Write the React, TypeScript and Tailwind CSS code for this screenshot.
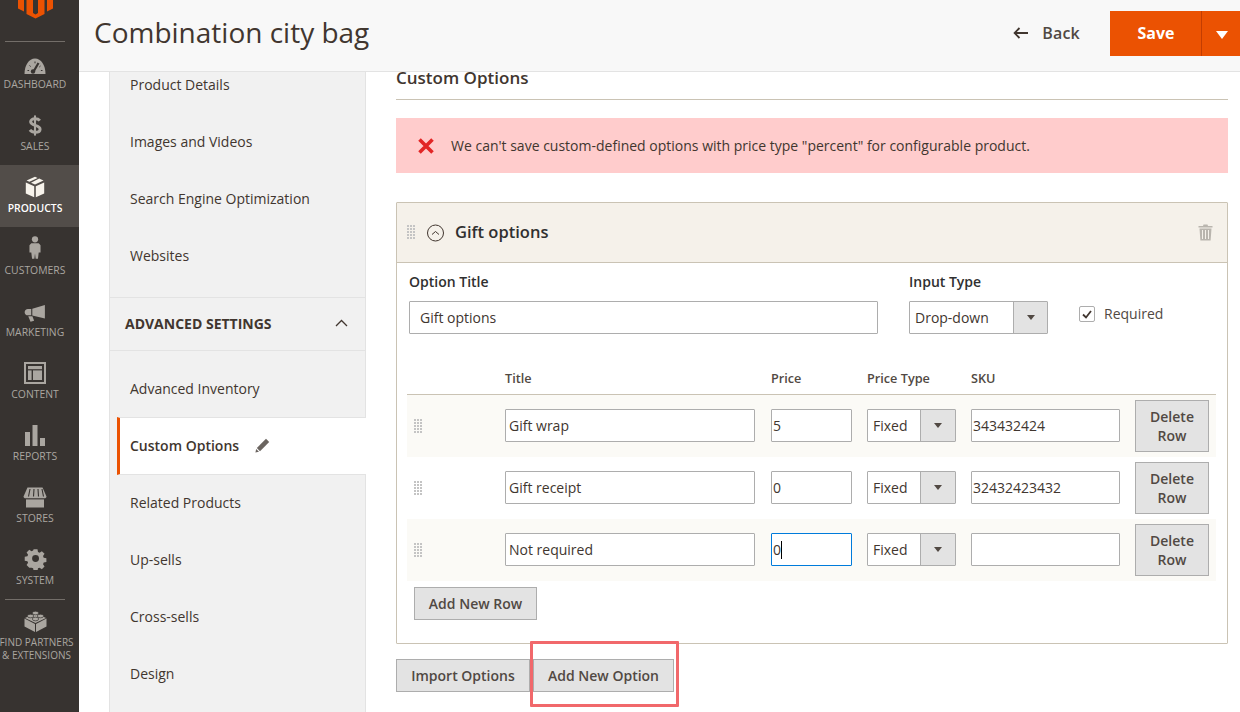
import React from "react";

const font = { fontFamily: '"Open Sans", sans-serif' };

const Grip = () => (
  <svg width="9" height="15" viewBox="0 0 9 15" className="shrink-0">
    {[0, 3, 6].map((x) =>
      [0, 3, 6, 9, 12].map((y) => <rect key={`${x}-${y}`} x={x} y={y} width="2" height="2" fill="#c4c4c4" />)
    )}
  </svg>
);

const Gauge = () => (
  <svg width="22" height="16" viewBox="0 0 22 16">
    <path fill="#aaa6a0" d="M0.5 16C0.5 7 5 .5 11 .5S21.5 7 21.5 16z" />
    <path d="M9 14.5L14.5 5" stroke="#373330" strokeWidth="2.2" />
    <circle cx="9" cy="13.5" r="2.2" fill="#373330" />
    <path d="M3.5 12.5h1.6M5.5 7.5l1.2 1M11 3.5v1.8M16.5 8l-1.2 1M18.5 12.5h-1.6" stroke="#373330" strokeWidth="1" />
  </svg>
);
const Dollar = () => (
  <svg width="14" height="21" viewBox="0 0 16 24" fill="none" stroke="#aaa6a0">
    <path d="M13.5 6.5C12 4.6 10 4.4 8 4.4 5 4.4 3 5.7 3 7.8c0 5 10.8 3 10.8 8.4 0 2.3-2.4 3.5-5.6 3.5-2.4 0-4.6-.7-6-2.6" strokeWidth="3.4" />
    <path d="M8 .5v23" strokeWidth="2.4" />
  </svg>
);
const Box = () => (
  <svg width="20" height="22" viewBox="0 0 20 22" fill="#f7f3eb">
    <path d="M0.8 6.5l8.4 3.7v11L0.8 17.5z" />
    <path d="M10.8 10.2l8.4-3.7v11l-8.4 3.7z" />
    <path d="M10 .7l2.6 1.2-8.2 3.8-2.8-1.2z" />
    <path d="M14.2 2.6l4.3 1.9-8.5 4-4-1.8z" />
  </svg>
);
const Person = () => (
  <svg width="12" height="25" viewBox="0 0 13 25" fill="#aaa6a0">
    <circle cx="6.5" cy="3.6" r="3.4" />
    <path d="M2.5 7.8h8L12.5 10v8h-2l-.8 6.6H7.2L6.5 19l-.7 5.6H3.3L2.5 18h-2v-8z" />
  </svg>
);
const Megaphone = () => (
  <svg width="22" height="18" viewBox="0 0 24 20" fill="#aaa6a0">
    <path d="M23 1v15L9 12.8V5.2z" />
    <path d="M7.8 5.6v7H4.2C2 12.6.5 11 .5 9.1s1.5-3.5 3.7-3.5z" />
    <path d="M4.5 13.6h4.6L11 18.6l-4 1.2z" />
  </svg>
);
const ContentIcon = () => (
  <svg width="22" height="22" viewBox="0 0 22 22" fill="none">
    <rect x="1" y="1" width="20" height="20" stroke="#aaa6a0" strokeWidth="2" />
    <rect x="4" y="4" width="14" height="3.2" fill="#aaa6a0" />
    <rect x="4" y="8.4" width="3.6" height="9.6" fill="#aaa6a0" />
    <rect x="9" y="8.4" width="9" height="9.6" fill="#aaa6a0" />
  </svg>
);
const Bars = () => (
  <svg width="20" height="21" viewBox="0 0 20 21" fill="#aaa6a0">
    <rect x="0" y="7" width="5" height="14" />
    <rect x="7.5" y="0" width="5" height="21" />
    <rect x="15" y="13" width="5" height="8" />
  </svg>
);
const Store = () => (
  <svg width="24" height="21" viewBox="0 0 24 21" fill="#aaa6a0">
    <path d="M4.5 0.5h15L23.5 9.5c0 1.2-1 1.8-2 1.8H2.5c-1 0-2-.6-2-1.8z" />
    <path d="M7 2L5.5 9.5M11 2L10.5 9.5M15 2L15.5 9.5M19 2L20.5 9.5" stroke="#373330" strokeWidth="1.1" />
    <path d="M3 12.4h18V20.5H3z" />
  </svg>
);
const Gear = () => (
  <svg width="23" height="23" viewBox="0 0 23 23">
    <path
      fill="#aaa6a0"
      fillRule="evenodd"
      d="M9.2.5h4.6l.6 3.2 1.9.8 2.7-1.8 3.2 3.2-1.8 2.7.8 1.9 3.2.6v4.6l-3.2.6-.8 1.9 1.8 2.7-3.2 3.2-2.7-1.8-1.9.8-.6 3.2H9.2l-.6-3.2-1.9-.8L4 22.4.8 19.2l1.8-2.7-.8-1.9-3.2-.6V9.4l3.2-.6.8-1.9L.8 4.2 4 1l2.7 1.8 1.9-.8zM11.5 7.4a4.1 4.1 0 1 0 0 8.2 4.1 4.1 0 0 0 0-8.2z"
      transform="translate(1.9 1.9) scale(.84)"
    />
  </svg>
);
const Lego = () => (
  <svg width="23" height="22" viewBox="0 0 23 22" fill="#aaa6a0">
    <path d="M0.5 8.5L11 14v8L.5 16.5z" />
    <path d="M12 14l10.5-5.5v8L12 22z" />
    <path d="M11.5 3L22 8 11.5 13 1 8z" />
    <ellipse cx="11.5" cy="3" rx="3.2" ry="1.8" stroke="#373330" strokeWidth=".7" />
    <ellipse cx="6.5" cy="6" rx="3.2" ry="1.8" stroke="#373330" strokeWidth=".7" />
    <ellipse cx="16.5" cy="6" rx="3.2" ry="1.8" stroke="#373330" strokeWidth=".7" />
    <ellipse cx="11.5" cy="9" rx="3.2" ry="1.8" stroke="#373330" strokeWidth=".7" />
  </svg>
);

const menu = [
  { label: "DASHBOARD", icon: <Gauge /> },
  { label: "SALES", icon: <Dollar /> },
  { label: "PRODUCTS", icon: <Box />, active: true },
  { label: "CUSTOMERS", icon: <Person /> },
  { label: "MARKETING", icon: <Megaphone /> },
  { label: "CONTENT", icon: <ContentIcon /> },
  { label: "REPORTS", icon: <Bars /> },
  { label: "STORES", icon: <Store /> },
  { label: "SYSTEM", icon: <Gear /> },
];

function Sidebar() {
  return (
    <aside className="w-[79px] shrink-0 h-full bg-[#373330] flex flex-col overflow-hidden">
      <div className="h-[41px] shrink-0 flex justify-start items-start pl-[18px]">
        <svg width="35" height="19" viewBox="0 0 35 19" fill="#eb5202">
          <path d="M0 0H6V11.5L0 8.5z" />
          <path d="M35 0H29V11.5L35 8.5z" />
          <path d="M8.5 0H15V13L17.5 14.5 20 13V0H26.5V14L17.5 18.5 8.5 14z" />
        </svg>
      </div>
      <div className="h-px ml-[5px] w-[60px] bg-[#736e69] shrink-0 -mb-px relative" />
      {menu.map((m) => (
        <div
          key={m.label}
          className={`h-[62px] shrink-0 flex flex-col items-center justify-end pb-[12px] pr-[9px] ${m.active ? "bg-[#524d49] text-white font-semibold" : "text-[#aaa6a0]"}`}
        >
          <div className="h-[26px] flex items-end justify-center">{m.icon}</div>
          <div className="text-[10.4px] leading-[14px] mt-[3px] whitespace-nowrap">{m.label}</div>
        </div>
      ))}
      <div className="h-px ml-[5px] w-[60px] bg-[#736e69] shrink-0" />
      <div className="flex flex-col items-center pt-[10px] pr-[6px] text-[#aaa6a0]">
        <div className="-ml-[3px]">
          <Lego />
        </div>
        <div className="text-[10px] leading-[13px] mt-[4px] text-center whitespace-nowrap">
          FIND PARTNERS
          <br />& EXTENSIONS
        </div>
      </div>
    </aside>
  );
}

function Header() {
  return (
    <header className="h-[72px] shrink-0 bg-[#f8f8f8] border-b border-[#e3e3e3] flex items-center pl-[15px]">
      <h1 className="text-[28px] leading-[36px] text-[#41362f] font-normal -mt-[7px]">Combination city bag</h1>
      <div className="ml-auto flex items-center -mt-[5px]">
        <svg width="15" height="12" viewBox="0 0 15 12" fill="none" stroke="#41362f" strokeWidth="1.8">
          <path d="M15 6H2M6.5 1L1.6 6l4.9 5" />
        </svg>
        <span className="ml-[14px] text-[16px] font-semibold text-[#514943] tracking-[.2px] -mt-px">Back</span>
        <div className="ml-[30px] h-[45px] w-[130px] bg-[#eb5202] flex text-white">
          <div className="w-[91px] pl-[1px] flex items-center justify-center text-[16px] font-bold">Save</div>
          <div className="w-px bg-[#c33d01]" />
          <div className="flex-1 pl-[2px] flex items-center justify-center">
            <div className="w-0 h-0 border-l-[6px] border-r-[6px] border-t-[8px] border-l-transparent border-r-transparent border-t-white mt-[3px]" />
          </div>
        </div>
      </div>
    </header>
  );
}

const NavItem = ({ children }: { children: React.ReactNode }) => (
  <div className="h-[57px] flex items-center pl-[20px] text-[14px] text-[#41362f]">{children}</div>
);

function LeftNav() {
  return (
    <nav className="ml-[30px] w-[257px] shrink-0 h-full overflow-hidden relative">
      <div className="-mt-[16px] bg-[#f1f1f1] border-l border-r border-[#e3e3e3] min-h-[720px]">
        <NavItem>Product Details</NavItem>
        <NavItem>Images and Videos</NavItem>
        <NavItem>Search Engine Optimization</NavItem>
        <NavItem>Websites</NavItem>
        <div className="h-[13px]" />
        <div className="h-[54px] border-y border-[#e3e3e3] flex items-center pl-[15px] pr-[17px] pb-[2px] justify-between">
          <span className="text-[14px] font-bold text-[#41362f]">ADVANCED SETTINGS</span>
          <svg width="13" height="8" viewBox="0 0 13 8" fill="none" stroke="#41362f" strokeWidth="1.3">
            <path d="M1 7l5.5-5.5L12 7" />
          </svg>
        </div>
        <div className="h-[9px]" />
        <NavItem>Advanced Inventory</NavItem>
        <div className="h-[58px] -mb-px ml-[7px] -mr-px pb-px bg-white border-l-[3px] border-[#eb5202] border-y border-y-[#e3e3e3] flex items-center pl-[10px] text-[14px] font-semibold text-[#41362f] gap-[16px] box-border relative">
          <span className="font-semibold">Custom Options</span>
          <svg width="15" height="15" viewBox="0 0 15 15" fill="#6b6560">
            <path d="M11 .8l3.2 3.2L5 13.2 1.8 10z" />
            <path d="M1.2 11L.4 14.6 4 13.8z" />
          </svg>
        </div>
        <NavItem>Related Products</NavItem>
        <NavItem>Up-sells</NavItem>
        <NavItem>Cross-sells</NavItem>
        <NavItem>Design</NavItem>
      </div>
    </nav>
  );
}

const Arrow = () => (
  <div className="w-0 h-0 border-l-[4px] border-r-[4px] border-t-[5px] border-l-transparent border-r-transparent border-t-[#514943]" />
);

const Select = ({ value, w, split, pl }: { value: string; w: string; split: string; pl: string }) => (
  <div className={`${w} h-[33px] border border-[#adadad] rounded-[1px] bg-white flex text-[14px] text-[#41362f] shrink-0`}>
    <div className={`flex-1 flex items-center ${pl}`}>{value}</div>
    <div className={`${split} bg-[#e3e3e3] border-l border-[#adadad] flex items-center justify-center`}>
      <Arrow />
    </div>
  </div>
);

const inputCls =
  "h-[33px] border border-[#adadad] rounded-[1px] bg-white text-[14px] text-[#41362f] outline-none shrink-0 block";

const Button = ({ children, cls }: { children: React.ReactNode; cls: string }) => (
  <button className={`bg-[#e3e3e3] border border-[#adadad] text-[14px] font-semibold text-[#514943] shrink-0 ${cls}`}>
    {children}
  </button>
);

function Row({
  title,
  price,
  sku,
  tint,
  focused,
}: {
  title: string;
  price: string;
  sku: string;
  tint?: boolean;
  focused?: boolean;
}) {
  return (
    <div className={`h-[62px] flex items-start pt-[14px] ${tint ? "bg-[#fbfaf6]" : "bg-white"}`}>
      <div className="w-[98px] pl-[7px] shrink-0 pt-[10px]">
        <Grip />
      </div>
      <input readOnly value={title} className={`${inputCls} w-[250px] px-[3px]`} />
      {focused ? (
        <div className={`${inputCls} ml-[16px] w-[81px] pl-[1px] !border-[#007bdb] flex items-center`}>
          <span>{price}</span>
          <span className="w-px h-[18px] bg-black" />
        </div>
      ) : (
        <input readOnly value={price} className={`${inputCls} ml-[16px] w-[81px] px-[1px]`} />
      )}
      <div className="ml-[15px]">
        <Select value="Fixed" w="w-[89px]" split="w-[35px]" pl="pl-[5px]" />
      </div>
      <input readOnly value={sku} className={`${inputCls} ml-[15px] w-[149px] px-[1px]`} />
      <Button cls="ml-[15px] -mt-[9px] w-[74px] h-[52px] leading-[19px] px-[8px]">Delete Row</Button>
    </div>
  );
}

function Card() {
  return (
    <section className="mt-[29px] h-[442px] border border-[#cac3b4] rounded-[1px]">
      <div className="h-[60px] bg-[#f5f1ea] border-b border-[#cac3b4] flex items-center pl-[10px] pr-[14px]">
        <Grip />
        <svg width="18" height="18" viewBox="0 0 18 18" fill="none" className="ml-[11px]">
          <circle cx="8.5" cy="9" r="8" stroke="#41362f" strokeWidth="1" />
          <path d="M5 10.5L8.5 7.5l3.5 3" stroke="#41362f" strokeWidth="1" />
        </svg>
        <span className="ml-[10px] text-[16.5px] leading-[22px] -mt-[2px] font-semibold text-[#303030]">Gift options</span>
        <svg width="15" height="17" viewBox="0 0 15 17" className="ml-auto" fill="#b9b5ae">
          <path d="M5.5.5h4l.5 1.5h4.5v1.6H.5V2H5z" />
          <path fillRule="evenodd" d="M1.5 4.6h12L12.6 16.5H2.4zM4 6v9h1V6zm3 0v9h1V6zm3 0v9h1V6z" />
        </svg>
      </div>
      <div className="flex pl-[12px] pt-[9px]">
        <div className="w-[500px]">
          <div className="text-[14px] font-semibold leading-[19px] text-[#303030]">Option Title</div>
          <input readOnly value="Gift options" className={`${inputCls} mt-[10px] w-[469px] px-[10px]`} />
        </div>
        <div>
          <div className="text-[14px] font-semibold leading-[19px] text-[#303030]">Input Type</div>
          <div className="mt-[10px]">
            <Select value="Drop-down" w="w-[139px]" split="w-[34px]" pl="pl-[5px]" />
          </div>
        </div>
        <div className="ml-[31px] mt-[34px] flex items-start">
          <div className="w-[16px] h-[16px] border border-[#adadad] rounded-[2px] bg-white flex items-center justify-center">
            <svg width="10" height="9" viewBox="0 0 10 9" fill="none" stroke="#41362f" strokeWidth="1.8">
              <path d="M1 4.5l3 3L9 1" />
            </svg>
          </div>
          <span className="ml-[9px] text-[14px] leading-[16px] text-[#514943]">Required</span>
        </div>
      </div>
      <div className="ml-[10px] mr-[11px] mt-[27px]">
        <div className="h-[34px] flex border-b border-[#cac3b4] text-[12.7px] font-semibold text-[#514943] pt-[8px]">
          <div className="ml-[98px] w-[266px]">Title</div>
          <div className="w-[96px]">Price</div>
          <div className="w-[104px]">Price Type</div>
          <div>SKU</div>
        </div>
        <Row title="Gift wrap" price="5" sku="343432424" tint />
        <Row title="Gift receipt" price="0" sku="32432423432" />
        <Row title="Not required" price="0" sku="" tint focused />
        <Button cls="mt-[6px] ml-[7px] w-[123px] h-[33px]">Add New Row</Button>
      </div>
    </section>
  );
}

export default function App() {
  return (
    <div className="w-[1240px] h-[712px] flex overflow-hidden bg-white" style={font}>
      <Sidebar />
      <div className="flex-1 flex flex-col min-w-0">
        <Header />
        <div className="flex-1 flex min-h-0">
          <LeftNav />
          <main className="ml-[30px] w-[832px] shrink-0">
            <div className="h-[28px] border-b border-[#cac3b4] text-[17px] font-semibold text-[#41362f] leading-[12px]">
              Custom Options
            </div>
            <div className="mt-[18px] h-[55px] bg-[#ffcccc] flex items-center pl-[22px] text-[14px] text-[#41362f]">
              <svg width="16" height="16" viewBox="0 0 16 16" stroke="#e22626" strokeWidth="3.6">
                <path d="M1.5 1.5l13 13M14.5 1.5l-13 13" />
              </svg>
              <span className="ml-[17px] -mt-[1px]">We can't save custom-defined options with price type "percent" for configurable product.</span>
            </div>
            <Card />
            <div className="relative mt-[15px] flex">
              <Button cls="w-[134px] h-[33px]">Import Options</Button>
              <Button cls="ml-[3px] w-[141px] h-[33px]">Add New Option</Button>
              <div className="absolute left-[134px] -top-[18px] w-[149px] h-[66px] border-[3px] border-[#f1686b] rounded-[1px]" />
            </div>
          </main>
        </div>
      </div>
    </div>
  );
}
